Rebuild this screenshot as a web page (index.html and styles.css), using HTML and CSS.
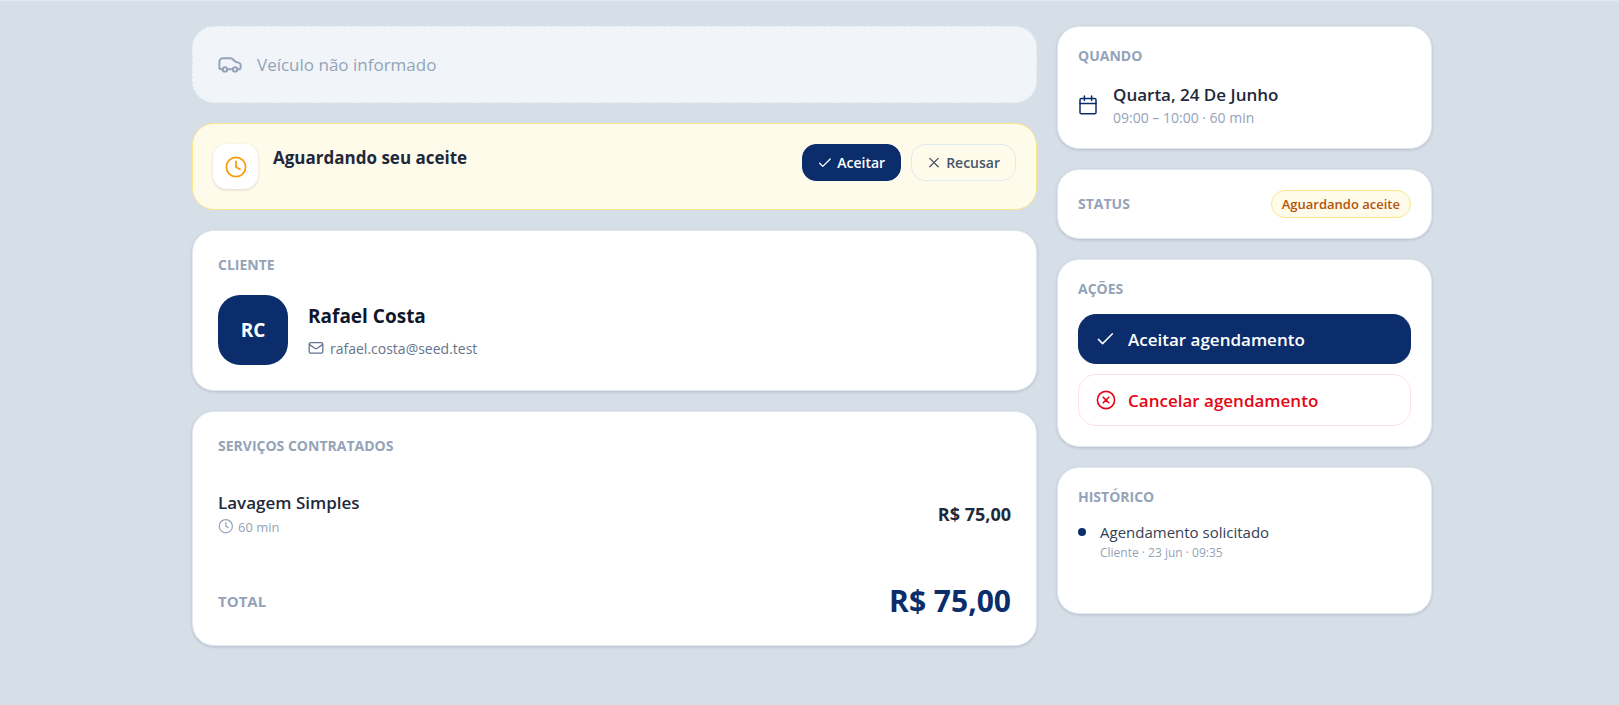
FILE: index.html
```html
<!DOCTYPE html>
<html lang="pt-BR">
<head>
	<meta charset="UTF-8">
	<meta name="viewport" content="width=device-width, initial-scale=1">
	<title>Agendamento</title>
	<link rel="stylesheet" href="styles.css">
</head>
<body>

	<main class="page">

		<!-- Main column -->
		<div class="column">

			<!-- Vehicle -->
			<section class="vehicle-empty">
				<svg class="icon-lg" viewBox="0 0 24 24" stroke-width="2">
					<path d="M4.6 16.2H3a1.6 1.6 0 0 1-1.6-1.6V8.6a3.4 3.4 0 0 1 3.4-3.4h7.4c1 0 1.9.3 2.6 1l2.7 2.6 3.6 1.1a2 2 0 0 1 1.5 1.9v2.6a1.8 1.8 0 0 1-1.8 1.8h-1.5M9.2 16.2h5.6"/>
					<circle cx="7" cy="16.4" r="2.2"/>
					<circle cx="17.1" cy="16.4" r="2.2"/>
				</svg>
				<span>Veículo não informado</span>
			</section>

			<!-- Waiting for the provider's answer -->
			<section class="notice">
				<div class="notice-icon">
					<svg class="icon-lg" viewBox="0 0 24 24" stroke-width="1.8">
						<circle cx="12" cy="12" r="9.6"/>
						<path d="M12 6.5V12l4 2.2"/>
					</svg>
				</div>
				<h2 class="notice-title">Aguardando seu aceite</h2>
				<div class="notice-buttons">
					<button type="button" class="btn-small btn-accept">
						<svg class="icon-sm" viewBox="0 0 14 14" stroke-width="1.3"><path d="M1.6 7.2l3.2 3.2 7.4-7.4"/></svg>
						Aceitar
					</button>
					<button type="button" class="btn-small btn-refuse">
						<svg class="icon-sm" viewBox="0 0 14 14" stroke-width="1.3"><path d="M2.8 2.4l8.4 8.4M11.2 2.4l-8.4 8.4"/></svg>
						Recusar
					</button>
				</div>
			</section>

			<!-- Client -->
			<section class="card card-wide">
				<h2 class="label">Cliente</h2>
				<div class="client">
					<div class="avatar">RC</div>
					<div>
						<p class="client-name">Rafael Costa</p>
						<p class="client-email">
							<svg class="icon-md" viewBox="0 0 16 16" stroke-width="1.3">
								<rect x="1.2" y="1.6" width="13.6" height="10.6" rx="1.6"/>
								<path d="M1.6 3.6L6.8 7.2a2 2 0 0 0 2.4 0l5.2-3.6"/>
							</svg>
							rafael.costa@seed.test
						</p>
					</div>
				</div>
			</section>

			<!-- Services -->
			<section class="card card-wide">
				<h2 class="label">Serviços contratados</h2>
				<div class="service">
					<div>
						<p class="item-title">Lavagem Simples</p>
						<p class="service-time">
							<svg class="icon-md" viewBox="0 0 16 16" stroke-width="1.2">
								<circle cx="7.8" cy="7.2" r="6.6"/>
								<path d="M7.8 3.6v3.6l2.4 1.4"/>
							</svg>
							60 min
						</p>
					</div>
					<p class="service-price">R$ 75,00</p>
				</div>
				<div class="total">
					<span class="total-label">Total</span>
					<span class="total-price">R$ 75,00</span>
				</div>
			</section>
		</div>

		<!-- Side column -->
		<aside class="column">

			<section class="card">
				<h2 class="label">Quando</h2>
				<div class="when">
					<svg class="icon-cal" viewBox="0 0 20 20" stroke-width="1.5">
						<rect x="2" y="3.4" width="16" height="15.4" rx="1.4"/>
						<path d="M2 8.4h16M6.4 1v4.4M13.6 1v4.4"/>
					</svg>
					<div class="when-text">
						<p class="item-title">Quarta, 24 De Junho</p>
						<p class="when-time">09:00 – 10:00 · 60 min</p>
					</div>
				</div>
			</section>

			<section class="card status">
				<h2 class="label">Status</h2>
				<span class="badge">Aguardando aceite</span>
			</section>

			<section class="card">
				<h2 class="label">Ações</h2>
				<div class="actions">
					<button type="button" class="btn btn-primary">
						<svg class="icon-cal" viewBox="0 0 20 20" stroke-width="1.5"><path d="M2.4 10.4l4.2 4.2L16.4 4.8"/></svg>
						Aceitar agendamento
					</button>
					<button type="button" class="btn btn-danger">
						<svg class="icon-cal" viewBox="0 0 20 20" stroke-width="1.6">
							<circle cx="10" cy="10" r="8.6"/>
							<path d="M7.2 7.2l5.6 5.6M12.8 7.2l-5.6 5.6"/>
						</svg>
						Cancelar agendamento
					</button>
				</div>
			</section>

			<section class="card">
				<h2 class="label">Histórico</h2>
				<ul class="history">
					<li>
						<p class="history-title">Agendamento solicitado</p>
						<p class="history-meta">Cliente · 23 jun · 09:35</p>
					</li>
				</ul>
			</section>
		</aside>

	</main>

</body>
</html>
```

FILE: styles.css
```css
* {
	box-sizing: border-box;
}

body {
	margin: 0;
	min-height: 100vh;
	padding: 25px 16px 59px 21px;
	border-top: 1px solid #e2e8f0;
	background-color: #d6dee8;
	font-family: "Open Sans", "Noto Sans", sans-serif;
	color: #1e293b;
}

h2, p, ul {
	margin: 0;
	padding: 0;
}

button {
	font-family: inherit;
	cursor: pointer;
}

svg {
	flex: none;
	fill: none;
	stroke: currentColor;
	stroke-linecap: round;
	stroke-linejoin: round;
}

/* Icon sizes */
.icon-sm {
	width: 14px;
	height: 14px;
}

.icon-md {
	width: 16px;
	height: 16px;
}

.icon-cal {
	width: 20px;
	height: 20px;
}

.icon-lg {
	width: 24px;
	height: 24px;
}

/* Two column layout */
.page {
	display: grid;
	grid-template-columns: minmax(0, 1fr) 375px;
	align-items: start;
	gap: 20px;
	max-width: 1240px;
	margin: 0 auto;
}

.column {
	display: flex;
	flex-direction: column;
	gap: 20px;
}

/* White cards */
.card {
	padding: 20px;
	background-color: #fff;
	border: 1px solid #e2e8f0;
	border-radius: 22px;
	box-shadow: 0 1px 3px rgba(15, 23, 42, 0.16);
}

.card-wide {
	padding: 25px;
}

.label {
	margin-bottom: 16px;
	font-size: 14px;
	line-height: 18px;
	font-weight: 700;
	text-transform: uppercase;
	color: #94a3b8;
}

.card-wide .label {
	margin-bottom: 21px;
}

.item-title {
	font-size: 17px;
	line-height: 24px;
	font-weight: 600;
}

/* Vehicle placeholder */
.vehicle-empty {
	display: flex;
	align-items: center;
	gap: 15px;
	padding: 25px;
	background-color: #f1f5f9;
	border: 1px dashed #e2e8f0;
	border-radius: 22px;
	font-size: 17px;
	line-height: 25px;
	color: #94a3b8;
}

/* Yellow notice */
.notice {
	display: flex;
	align-items: flex-start;
	gap: 15px;
	padding: 20px;
	background-color: #fffbeb;
	border: 1px solid #fde68a;
	border-radius: 22px;
}

.notice-icon {
	display: flex;
	align-items: center;
	justify-content: center;
	width: 45px;
	height: 45px;
	border-radius: 14px;
	background-color: #fff;
	color: #f99d0b;
	box-shadow: 0 1px 3px rgba(15, 23, 42, 0.16);
}

.notice-title {
	flex: 1;
	font-size: 17px;
	line-height: 28px;
	font-weight: 700;
}

.notice-buttons {
	display: flex;
	gap: 10px;
}

.btn-small {
	display: flex;
	align-items: center;
	gap: 5px;
	height: 37px;
	padding: 0 15px;
	border: 1px solid #0b2d6b;
	border-radius: 14px;
	font-size: 14px;
	font-weight: 600;
}

.btn-accept {
	background-color: #0b2d6b;
	color: #fff;
}

.btn-refuse {
	background-color: transparent;
	border-color: #e2e8f0;
	color: #475569;
}

/* Client */
.client {
	display: flex;
	align-items: center;
	gap: 20px;
}

.avatar {
	width: 70px;
	height: 70px;
	border-radius: 22px;
	background-color: #0b2d6b;
	color: #fff;
	font-size: 19px;
	line-height: 70px;
	font-weight: 700;
	text-align: center;
}

.client-name {
	font-size: 19px;
	line-height: 30px;
	font-weight: 700;
	color: #0f172a;
}

.client-email {
	display: flex;
	align-items: center;
	gap: 6px;
	margin-top: 8px;
	font-size: 14px;
	line-height: 20px;
	color: #64748b;
}

/* Services */
.service {
	display: flex;
	align-items: center;
	justify-content: space-between;
	padding: 15px 0;
}

.service-time {
	display: flex;
	align-items: center;
	gap: 4px;
	margin-top: 2px;
	font-size: 13px;
	line-height: 20px;
	color: #94a3b8;
}

.service-price {
	font-size: 18px;
	line-height: 24px;
	font-weight: 700;
}

.total {
	display: flex;
	align-items: center;
	justify-content: space-between;
	margin-top: 30px;
	line-height: 38px;
	font-weight: 700;
}

.total-label {
	font-size: 15px;
	text-transform: uppercase;
	color: #94a3b8;
}

.total-price {
	font-size: 30px;
	color: #0b2d6b;
}

/* Date and time */
.when {
	display: flex;
	align-items: center;
	gap: 15px;
	color: #0b2d6b;
}

.when-text {
	padding-top: 2px;
}

.when .item-title {
	color: #1e293b;
}

.when-time {
	font-size: 14px;
	line-height: 21px;
	color: #94a3b8;
}

/* Status */
.status {
	display: flex;
	align-items: center;
	justify-content: space-between;
}

.status .label {
	margin-bottom: 0;
}

.badge {
	padding: 0 10px;
	border: 1px solid #fde68a;
	border-radius: 14px;
	background-color: #fffbeb;
	font-size: 13px;
	line-height: 26px;
	font-weight: 600;
	color: #b45309;
}

/* Actions */
.actions {
	display: flex;
	flex-direction: column;
	gap: 10px;
}

.btn {
	display: flex;
	align-items: center;
	gap: 12px;
	height: 50px;
	padding: 0 17px;
	border: 1px solid #0b2d6b;
	border-radius: 18px;
	font-size: 17px;
	font-weight: 600;
}

.btn-primary {
	background-color: #0b2d6b;
	color: #fff;
}

.btn-danger {
	height: 52px;
	background-color: #fff;
	border-color: #fee2e2;
	color: #e30613;
}

/* History */
.history {
	min-height: 71px;
	list-style: none;
}

.history li {
	position: relative;
	padding-left: 22px;
}

.history li::before {
	content: "";
	position: absolute;
	top: 6px;
	left: 0;
	width: 8px;
	height: 8px;
	border-radius: 50%;
	background-color: #0b2d6b;
}

.history-title {
	font-size: 15px;
	line-height: 20px;
	font-weight: 500;
	color: #334155;
}

.history-meta {
	font-size: 12px;
	line-height: 22px;
	color: #94a3b8;
}
```
